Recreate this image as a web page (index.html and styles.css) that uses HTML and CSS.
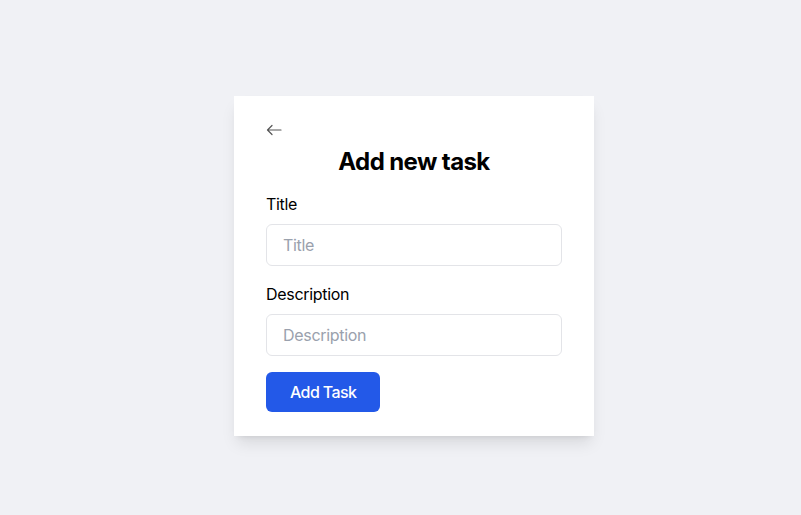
FILE: index.html
```html
<!DOCTYPE html>
<html lang="en">
<head>
<meta charset="utf-8">
<title>Add new task</title>
<link rel="stylesheet" href="styles.css">
</head>
<body>
<main class="page">
  <section class="card">
    <button class="back" type="button" aria-label="Back">
      <svg width="16" height="12" viewBox="0 0 16 12" fill="none" stroke="#555" stroke-width="1.2" stroke-linecap="round" stroke-linejoin="round"><path d="M15 6H1.5M6 1.5L1.5 6L6 10.5"/></svg>
    </button>
    <h1 class="heading">Add new task</h1>
    <form class="form">
      <label class="field">
        <span class="label">Title</span>
        <input class="input" type="text" placeholder="Title">
      </label>
      <label class="field">
        <span class="label">Description</span>
        <input class="input" type="text" placeholder="Description">
      </label>
      <div><button class="submit" type="button">Add Task</button></div>
    </form>
  </section>
</main>
</body>
</html>
```
FILE: styles.css
```css
* { box-sizing: border-box; }
html, body { margin: 0; height: 100%; }
body {
  background: #f0f1f5;
  font-family: Inter, "Noto Sans", sans-serif;
  color: #000;
}
.page {
  padding: 96px 0 0 234px;
}
.card {
  width: 360px;
  background: #fff;
  padding: 24px 32px 24px;
  box-shadow: 0 10px 15px -3px rgba(0,0,0,0.1), 0 4px 6px -4px rgba(0,0,0,0.1);
}
.back {
  display: flex;
  align-items: center;
  height: 24px;
  padding: 0;
  border: 0;
  background: none;
  cursor: pointer;
  margin: -2px 0 4px;
}
.heading {
  margin: 0;
  text-align: center;
  font-size: 24px;
  line-height: 32px;
  font-weight: 700;
  letter-spacing: -0.6px;
}
.form {
  margin-top: 14px;
  display: flex;
  flex-direction: column;
  gap: 16px;
}
.field {
  display: flex;
  flex-direction: column;
  gap: 8px;
}
.label {
  font-size: 16px;
  line-height: 24px;
  letter-spacing: -0.3px;
}
.input {
  height: 42px;
  width: 100%;
  border: 1px solid #e3e4e8;
  border-radius: 6px;
  padding: 0 16px;
  font: inherit;
  font-size: 16px;
  letter-spacing: -0.3px;
  color: #111;
  outline: none;
}
.input::placeholder { color: #9aa1ad; }
.submit {
  height: 40px;
  padding: 0 24px;
  border: 0;
  border-radius: 6px;
  background: #2359e8;
  color: #fff;
  font: inherit;
  font-size: 16px;
  font-weight: 500;
  letter-spacing: -0.6px;
  cursor: pointer;
}
```
